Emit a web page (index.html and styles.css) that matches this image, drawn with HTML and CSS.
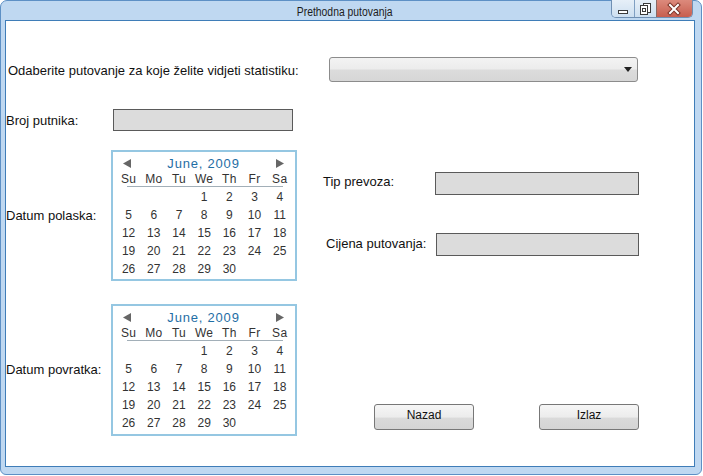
FILE: index.html
```html
<!DOCTYPE html>
<html>
<head>
<meta charset="utf-8">
<link rel="stylesheet" href="styles.css">
</head>
<body>
<div class="window">
  <div class="titlebar">
    <div class="title"><span class="title-text">Prethodna putovanja</span></div>
    <div class="wbtns">
      <span class="wb wb-min"><svg width="22" height="16" viewBox="0 0 22 16"><rect x="6.5" y="9.5" width="9" height="3" fill="#fff" stroke="#3a3a3a"/></svg></span>
      <span class="wb wb-max"><svg width="21" height="16" viewBox="0 0 21 16"><rect x="8.5" y="2.5" width="7" height="9" fill="#fff" stroke="#3a3a3a"/><rect x="5.5" y="4.5" width="7" height="9" fill="#fff" stroke="#3a3a3a"/><rect x="7.5" y="7.5" width="3" height="3" fill="none" stroke="#3a3a3a"/></svg></span>
      <span class="wb wb-close"><svg width="35" height="16" viewBox="0 0 35 16"><path d="M13 4 L21 12 M21 4 L13 12" stroke="#7a3328" stroke-width="4" stroke-linecap="square"/><path d="M13 4 L21 12 M21 4 L13 12" stroke="#fff" stroke-width="2" stroke-linecap="square"/></svg></span>
    </div>
  </div>
  <div class="content">
    <div class="pick-row">
      <span class="pick-label">Odaberite putovanje za koje želite vidjeti statistiku:</span>
      <div class="combo"><svg class="combo-arrow" width="8" height="6" viewBox="0 0 8 6"><polygon points="0,0 8,0 4,5" fill="#222"/></svg></div>
    </div>
    <div class="field-row">
      <span class="lbl lbl-broj">Broj putnika:</span>
      <div class="box box-broj"></div>
    </div>

    <div class="section sec1">
      <span class="side-label">Datum polaska:</span>
      <div class="cal">
        <div class="cal-head">
          <svg width="8" height="9" viewBox="0 0 8 9"><polygon points="8,0 8,9 0,4.5" fill="#666"/></svg>
          <span class="cal-title">June, 2009</span>
          <svg width="8" height="9" viewBox="0 0 8 9"><polygon points="0,0 0,9 8,4.5" fill="#666"/></svg>
        </div>
        <div class="cal-names"><span>Su</span><span>Mo</span><span>Tu</span><span>We</span><span>Th</span><span>Fr</span><span>Sa</span></div>
        <div class="cal-line"></div>
        <div class="cal-days">
          <span></span><span></span><span></span><span>1</span><span>2</span><span>3</span><span>4</span>
          <span>5</span><span>6</span><span>7</span><span>8</span><span>9</span><span>10</span><span>11</span>
          <span>12</span><span>13</span><span>14</span><span>15</span><span>16</span><span>17</span><span>18</span>
          <span>19</span><span>20</span><span>21</span><span>22</span><span>23</span><span>24</span><span>25</span>
          <span>26</span><span>27</span><span>28</span><span>29</span><span>30</span><span></span><span></span>
        </div>
      </div>
      <div class="right-col">
        <div class="field-row tip-row">
          <span class="lbl lbl-tip">Tip prevoza:</span>
          <div class="box box-tip"></div>
        </div>
        <div class="field-row cij-row">
          <span class="lbl lbl-cij">Cijena putovanja:</span>
          <div class="box box-cij"></div>
        </div>
      </div>
    </div>

    <div class="section sec2">
      <span class="side-label">Datum povratka:</span>
      <div class="cal cal2">
        <div class="cal-head">
          <svg width="8" height="9" viewBox="0 0 8 9"><polygon points="8,0 8,9 0,4.5" fill="#666"/></svg>
          <span class="cal-title">June, 2009</span>
          <svg width="8" height="9" viewBox="0 0 8 9"><polygon points="0,0 0,9 8,4.5" fill="#666"/></svg>
        </div>
        <div class="cal-names"><span>Su</span><span>Mo</span><span>Tu</span><span>We</span><span>Th</span><span>Fr</span><span>Sa</span></div>
        <div class="cal-line"></div>
        <div class="cal-days">
          <span></span><span></span><span></span><span>1</span><span>2</span><span>3</span><span>4</span>
          <span>5</span><span>6</span><span>7</span><span>8</span><span>9</span><span>10</span><span>11</span>
          <span>12</span><span>13</span><span>14</span><span>15</span><span>16</span><span>17</span><span>18</span>
          <span>19</span><span>20</span><span>21</span><span>22</span><span>23</span><span>24</span><span>25</span>
          <span>26</span><span>27</span><span>28</span><span>29</span><span>30</span><span></span><span></span>
        </div>
      </div>
      <div class="actions">
        <button class="btn btn-nazad">Nazad</button>
        <button class="btn btn-izlaz">Izlaz</button>
      </div>
    </div>
  </div>
</div>
</body>
</html>
```

FILE: styles.css
```css
html, body {
  margin: 0;
  padding: 0;
  background: #ffffff;
}
body {
  font-family: "Liberation Sans", Arial, sans-serif;
  color: #111;
}
.window {
  box-sizing: border-box;
  width: 702px;
  height: 475px;
  border: 1px solid #5d90c5;
  border-radius: 7px 7px 6px 6px;
  background: #bfd8f1;
  display: flex;
  flex-direction: column;
}
.titlebar {
  height: 19px;
  flex: none;
  display: flex;
  align-items: flex-start;
}
.title {
  flex: 1;
  padding-left: 77px;
  text-align: center;
  line-height: 20px;
}
.title-text {
  display: inline-block;
  font-family: "Liberation Sans", Arial, sans-serif;
  font-size: 12.5px;
  color: #1c1c1c;
  transform: scaleX(0.83);
}
.wbtns {
  display: flex;
  margin-top: -1px;
  margin-right: 8px;
  height: 17px;
  border: 1px solid #6f8fb3;
  border-top: none;
  border-radius: 0 0 5px 5px;
  overflow: hidden;
}
.wb {
  display: flex;
  align-items: center;
  justify-content: center;
  height: 17px;
}
.wb-min {
  width: 22px;
  background: linear-gradient(#e6eff8, #cddff0);
  border-right: 1px solid #7f9fc2;
}
.wb-max {
  width: 21px;
  background: linear-gradient(#e6eff8, #cddff0);
  border-right: 1px solid #8a6a66;
}
.wb-close {
  width: 35px;
  background: linear-gradient(#dc8a7c, #c75e4f);
}
.content {
  flex: 1;
  margin: 0 6px 7px 4px;
  border: 1px solid #3f7db8;
  background: #ffffff;
  padding-top: 36px;
  font-size: 13px;
}
.pick-row {
  display: flex;
  align-items: center;
  height: 25px;
  padding-left: 2px;
}
.pick-label {
  width: 321px;
  flex: none;
  padding-top: 2px;
}
.combo {
  box-sizing: border-box;
  width: 309px;
  height: 25px;
  border: 1px solid #8c8c8c;
  border-radius: 3px;
  background: linear-gradient(#f3f3f3 0%, #ececec 48%, #dcdcdc 52%, #d6d6d6 100%);
  display: flex;
  align-items: center;
  justify-content: flex-end;
  padding-right: 5px;
}
.combo-arrow {
  display: block;
  margin-top: 1px;
}
.field-row {
  display: flex;
  align-items: center;
  margin-top: 27px;
  height: 22px;
}
.lbl {
  flex: none;
}
.lbl-broj {
  width: 107px;
}
.box {
  box-sizing: border-box;
  flex: none;
  border: 1px solid #5a5a5a;
  background: #dcdcdc;
}
.box-broj {
  width: 180px;
  height: 22px;
}
.section {
  display: flex;
  align-items: center;
}
.sec1 {
  margin-top: 19px;
  align-items: flex-start;
}
.sec1 .side-label {
  align-self: center;
}
.sec2 {
  margin-top: 23px;
}
.sec2 .side-label {
  padding-bottom: 2px;
}
.side-label {
  width: 105px;
  flex: none;
}
.cal {
  box-sizing: border-box;
  width: 186px;
  height: 131px;
  flex: none;
  border: 2px solid #95c7e2;
  padding: 2px 3px 0 3px;
  color: #333;
  font-size: 12px;
}
.cal2 {
  height: 132px;
}
.cal-head {
  display: flex;
  align-items: center;
  height: 18px;
  padding: 0 8px 0 7px;
}
.cal-head svg {
  display: block;
  flex: none;
}
.cal-title {
  flex: 1;
  text-align: center;
  color: #1f6ea5;
  font-size: 13px;
  letter-spacing: 0.8px;
}
.cal-names, .cal-days {
  display: grid;
  grid-template-columns: repeat(7, 25.2px);
}
.cal-names {
  height: 14px;
  line-height: 14px;
  letter-spacing: 0.3px;
}
.cal-names span, .cal-days span {
  text-align: center;
}
.cal-line {
  height: 1px;
  background: #a2afb8;
  margin: 0 0 0 11px;
  width: 156px;
}
.cal-days {
  padding-top: 1px;
  grid-auto-rows: 18px;
  line-height: 18px;
}
.right-col {
  margin-left: 26px;
  display: flex;
  flex-direction: column;
}
.tip-row {
  margin-top: 22px;
  height: 23px;
}
.lbl-tip {
  width: 112px;
  padding-bottom: 4px;
}
.box-tip {
  width: 204px;
  height: 23px;
}
.cij-row {
  margin-top: 38px;
  height: 23px;
  padding-left: 3px;
}
.lbl-cij {
  width: 110px;
  padding-bottom: 2px;
}
.box-cij {
  width: 203px;
  height: 23px;
}
.actions {
  display: flex;
  align-self: flex-end;
  margin-bottom: 6px;
}
.btn {
  box-sizing: border-box;
  width: 100px;
  height: 26px;
  border: 1px solid #777;
  border-radius: 3px;
  background: linear-gradient(#f6f6f6 0%, #ececec 50%, #dadada 55%, #d4d4d4 100%);
  font-family: "Liberation Sans", Arial, sans-serif;
  font-size: 12px;
  color: #111;
  padding: 0 0 4px 0;
}
.btn-nazad {
  margin-left: 77px;
}
.btn-izlaz {
  margin-left: 65px;
  margin-bottom: -1px;
}
```
